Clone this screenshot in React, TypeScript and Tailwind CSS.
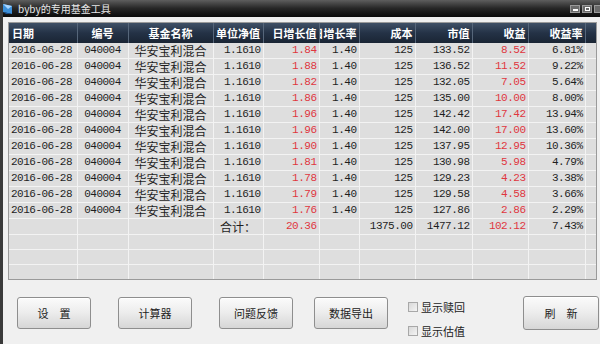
const rows = [
  { nav: "1.1610", dv: "1.84", dr: "1.40", cost: "125", mv: "133.52", pf: "8.52", pr: "6.81%" },
  { nav: "1.1610", dv: "1.88", dr: "1.40", cost: "125", mv: "136.52", pf: "11.52", pr: "9.22%" },
  { nav: "1.1610", dv: "1.82", dr: "1.40", cost: "125", mv: "132.05", pf: "7.05", pr: "5.64%" },
  { nav: "1.1610", dv: "1.86", dr: "1.40", cost: "125", mv: "135.00", pf: "10.00", pr: "8.00%" },
  { nav: "1.1610", dv: "1.96", dr: "1.40", cost: "125", mv: "142.42", pf: "17.42", pr: "13.94%" },
  { nav: "1.1610", dv: "1.96", dr: "1.40", cost: "125", mv: "142.00", pf: "17.00", pr: "13.60%" },
  { nav: "1.1610", dv: "1.90", dr: "1.40", cost: "125", mv: "137.95", pf: "12.95", pr: "10.36%" },
  { nav: "1.1610", dv: "1.81", dr: "1.40", cost: "125", mv: "130.98", pf: "5.98", pr: "4.79%" },
  { nav: "1.1610", dv: "1.78", dr: "1.40", cost: "125", mv: "129.23", pf: "4.23", pr: "3.38%" },
  { nav: "1.1610", dv: "1.79", dr: "1.40", cost: "125", mv: "129.58", pf: "4.58", pr: "3.66%" },
  { nav: "1.1610", dv: "1.76", dr: "1.40", cost: "125", mv: "127.86", pf: "2.86", pr: "2.29%" },
];

const widths = [68, 51, 85, 50, 56, 40, 56, 57, 56, 57, 11];

const heads: { t: string; a: string }[] = [
  { t: "日期", a: "justify-start pl-[3px]" },
  { t: "编号", a: "justify-center" },
  { t: "基金名称", a: "justify-center" },
  { t: "单位净值", a: "justify-center" },
  { t: "日增长值", a: "justify-end pr-[2px]" },
  { t: "日增长率", a: "justify-end pr-[2px]" },
  { t: "成本", a: "justify-end pr-[2px]" },
  { t: "市值", a: "justify-end pr-[2px]" },
  { t: "收益", a: "justify-end pr-[2px]" },
  { t: "收益率", a: "justify-end pr-[2px]" },
  { t: "", a: "" },
];

const num = "font-['Liberation_Mono','Noto_Sans_CJK_SC',monospace] text-[11px] tracking-[-0.5px]";
const cell = "h-[15px] p-0 px-[2px] border-r border-b border-[#f3f3f3] whitespace-nowrap overflow-hidden leading-[15px]";
const red = "text-[#e0363e]";

function Btn({ label, tall }: { label: string; tall?: boolean }) {
  return (
    <button
      className={`${tall ? "h-[34px] w-[76px]" : "h-[32px] w-[74px]"} rounded-[3px] border border-[#8e8e8e] bg-gradient-to-b from-[#fbfbfb] via-[#ececec] to-[#d6d6d6] text-[11px] text-[#222] font-['Noto_Sans_CJK_SC',sans-serif] shadow-[inset_0_1px_0_#ffffff]`}
    >
      {label}
    </button>
  );
}

function Check({ label }: { label: string }) {
  return (
    <label className="h-[14px] flex items-center gap-[3px] text-[11px] text-[#222] font-['Noto_Sans_CJK_SC',sans-serif]">
      <span className="w-[10px] h-[10px] border border-[#a8a8a8] bg-gradient-to-br from-[#d8d8d8] to-[#f4f4f4]" />
      {label}
    </label>
  );
}

export default function App() {
  const empty = Array.from({ length: 3 });
  return (
    <div className="w-[600px] h-[344px] bg-[#f0f0f0] flex flex-col overflow-hidden border-l-[3px] border-[#3a3a3a]">
      {/* title bar */}
      <div className="h-[17px] shrink-0 flex items-center bg-gradient-to-b from-[#5e5e5e] via-[#262626] to-[#0b0b0b] -ml-[3px]">
        <svg width="12" height="12" viewBox="0 0 12 12" className="ml-[2px]">
          <path d="M1 1 L10 3 L10 11 L1 9 Z" fill="#3c8fd8" />
          <path d="M1 1 L10 3 L6 6 Z" fill="#a9d6ff" />
          <path d="M1 9 L10 11 L4 11 Z" fill="#1b4f8c" />
        </svg>
        <span className="ml-[4px] text-[10px] text-[#e8e8e8] font-['Noto_Sans_CJK_SC',sans-serif] leading-none">byby的专用基金工具</span>
        <div className="ml-auto flex gap-[2px]">
          <span className="w-[10px] h-[8px] bg-[#6a6a6a] border border-[#999] flex items-end justify-center pb-[1px]">
            <span className="w-[5px] h-[2px] bg-white" />
          </span>
          <span className="w-[10px] h-[8px] bg-[#6a6a6a] border border-[#999] flex items-center justify-center">
            <span className="w-[5px] h-[4px] border border-white" />
          </span>
          <span className="w-[6px] h-[8px] bg-[#6a6a6a] border-l border-y border-[#999]" />
        </div>
      </div>

      {/* grid */}
      <div className="mt-[5px] ml-[5px] mr-[3px] h-[258px] shrink-0 overflow-hidden border border-[#9a9a9a] bg-[#dedede]">
        <table className="table-fixed border-collapse w-[587px]">
          <colgroup>
            {widths.map((w, i) => (
              <col key={i} style={{ width: w }} />
            ))}
          </colgroup>
          <thead>
            <tr className="bg-gradient-to-b from-[#3f5066] via-[#243246] to-[#1a2534]">
              {heads.map((h, i) => (
                <th key={i} className="h-[20px] p-0 border-r border-[#56667a]">
                  <div
                    className={`flex ${h.a} overflow-hidden text-[11px] font-bold text-white whitespace-nowrap font-['Noto_Sans_CJK_SC',sans-serif] leading-[20px]`}
                  >
                    <span className="shrink-0">{h.t}</span>
                  </div>
                </th>
              ))}
            </tr>
          </thead>
          <tbody className="text-[#1e1e1e]">
            {rows.map((r, i) => (
              <tr key={i}>
                <td className={`${cell} ${num} text-left`}>2016-06-28</td>
                <td className={`${cell} ${num} text-center`}>040004</td>
                <td className={`${cell} text-center text-[12px] font-['Noto_Sans_CJK_SC',sans-serif]`}>华安宝利混合</td>
                <td className={`${cell} ${num} text-right`}>{r.nav}</td>
                <td className={`${cell} ${num} text-right ${red}`}>{r.dv}</td>
                <td className={`${cell} ${num} text-right`}>{r.dr}</td>
                <td className={`${cell} ${num} text-right`}>{r.cost}</td>
                <td className={`${cell} ${num} text-right`}>{r.mv}</td>
                <td className={`${cell} ${num} text-right ${red}`}>{r.pf}</td>
                <td className={`${cell} ${num} text-right`}>{r.pr}</td>
                <td className={cell} />
              </tr>
            ))}
            <tr>
              <td className={cell} />
              <td className={cell} />
              <td className={cell} />
              <td className={`${cell} text-center text-[12px] font-['Noto_Sans_CJK_SC',sans-serif]`}>合计：</td>
              <td className={`${cell} ${num} text-right ${red}`}>20.36</td>
              <td className={cell} />
              <td className={`${cell} ${num} text-right`}>1375.00</td>
              <td className={`${cell} ${num} text-right`}>1477.12</td>
              <td className={`${cell} ${num} text-right ${red}`}>102.12</td>
              <td className={`${cell} ${num} text-right`}>7.43%</td>
              <td className={cell} />
            </tr>
            {empty.map((_, i) => (
              <tr key={`e${i}`}>
                {widths.map((_, j) => (
                  <td key={j} className={cell} />
                ))}
              </tr>
            ))}
          </tbody>
        </table>
      </div>

      {/* bottom bar */}
      <div className="flex items-start mt-[16px] pl-[14px]">
        <div className="flex gap-[27px] mt-[1px]">
          <Btn label="设　置" />
          <Btn label="计算器" />
          <Btn label="问题反馈" />
        </div>
        <div className="ml-[21px] mt-[1px]">
          <Btn label="数据导出" />
        </div>
        <div className="ml-[20px] flex flex-col gap-[10px] mt-[4px]">
          <Check label="显示赎回" />
          <Check label="显示估值" />
        </div>
        <div className="ml-auto mr-[1px]">
          <Btn label="刷　新" tall />
        </div>
      </div>
    </div>
  );
}
